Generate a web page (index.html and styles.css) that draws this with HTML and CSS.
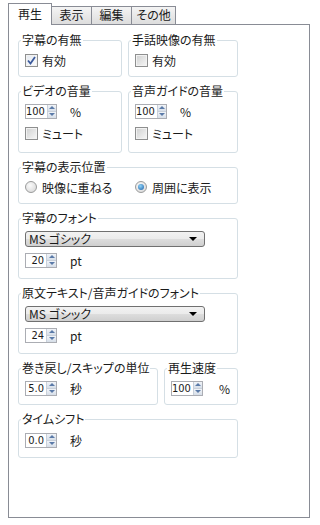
FILE: index.html
```html
<!DOCTYPE html>
<html lang="ja">
<head>
  <meta charset="UTF-8" />
  <title>設定</title>
  <link rel="stylesheet" href="styles.css">
</head>
<body>
  <div class="window">
    <div class="tabs">
      <div class="tab active">再生</div>
      <div class="tab">表示</div>
      <div class="tab">編集</div>
      <div class="tab wide">その他</div>
    </div>

    <div class="panel">
      <div class="content">

        <div class="pair">
          <fieldset class="group">
            <legend>字幕の有無</legend>
            <label class="row">
              <span class="check on">
                <svg width="9" height="9" viewBox="0 0 9 9"><path d="M1 4.5 L3.5 7.5 L8 1" fill="none" stroke="#3c5a9c" stroke-width="1.8"/></svg>
              </span>有効
            </label>
          </fieldset>
          <fieldset class="group">
            <legend>手話映像の有無</legend>
            <label class="row"><span class="check"></span>有効</label>
          </fieldset>
        </div>

        <div class="pair">
          <fieldset class="group vol">
            <legend>ビデオの音量</legend>
            <div class="row">
              <span class="spin"><span class="val">100</span><span class="btns"><i class="up"></i><i class="down"></i></span></span>
              <span class="unit">%</span>
            </div>
            <label class="row mute"><span class="check"></span>ミュート</label>
          </fieldset>
          <fieldset class="group vol">
            <legend>音声ガイドの音量</legend>
            <div class="row">
              <span class="spin"><span class="val">100</span><span class="btns"><i class="up"></i><i class="down"></i></span></span>
              <span class="unit">%</span>
            </div>
            <label class="row mute"><span class="check"></span>ミュート</label>
          </fieldset>
        </div>

        <fieldset class="group">
          <legend>字幕の表示位置</legend>
          <div class="row">
            <label class="radio-item first"><span class="radio"></span>映像に重ねる</label>
            <label class="radio-item"><span class="radio on"></span>周囲に表示</label>
          </div>
        </fieldset>

        <fieldset class="group font">
          <legend>字幕のフォント</legend>
          <div class="select">MS ゴシック<span class="caret"></span></div>
          <div class="row">
            <span class="spin"><span class="val">20</span><span class="btns"><i class="up"></i><i class="down"></i></span></span>
            <span class="unit">pt</span>
          </div>
        </fieldset>

        <fieldset class="group font">
          <legend>原文テキスト/音声ガイドのフォント</legend>
          <div class="select">MS ゴシック<span class="caret"></span></div>
          <div class="row">
            <span class="spin"><span class="val">24</span><span class="btns"><i class="up"></i><i class="down"></i></span></span>
            <span class="unit">pt</span>
          </div>
        </fieldset>

        <div class="pair skip">
          <fieldset class="group">
            <legend>巻き戻し/スキップの単位</legend>
            <div class="row">
              <span class="spin"><span class="val">5.0</span><span class="btns"><i class="up"></i><i class="down"></i></span></span>
              <span class="unit">秒</span>
            </div>
          </fieldset>
          <fieldset class="group">
            <legend>再生速度</legend>
            <div class="row">
              <span class="spin"><span class="val">100</span><span class="btns"><i class="up"></i><i class="down"></i></span></span>
              <span class="unit wide">%</span>
            </div>
          </fieldset>
        </div>

        <fieldset class="group last">
          <legend>タイムシフト</legend>
          <div class="row">
            <span class="spin"><span class="val">0.0</span><span class="btns"><i class="up"></i><i class="down"></i></span></span>
            <span class="unit">秒</span>
          </div>
        </fieldset>

      </div>
    </div>
  </div>
</body>
</html>
```

FILE: styles.css
```css
/* Basics */
* {
  box-sizing: border-box;
}
body {
  margin: 0;
  background: #fff;
  color: #1a1a1a;
  font-family: "Noto Sans CJK JP", "DejaVu Sans", sans-serif;
  font-size: 12px;
  font-feature-settings: "palt";
}

.window {
  padding: 3px 10px 0 8px;
}

/* Tabs */
.tabs {
  display: flex;
  align-items: flex-end;
  height: 21px;
  position: relative;
  z-index: 1;
}
.tab {
  width: 41px;
  height: 18px;
  margin-left: -1px;
  border: 1px solid #898c95;
  border-bottom: none;
  background: linear-gradient(#f4f4f4, #dddddd);
  text-align: center;
  line-height: 16px;
}
.tab.wide {
  width: 45px;
}
.tab.active {
  width: 44px;
  height: 22px;
  margin-left: 0;
  margin-bottom: -1px;
  background: #fff;
  line-height: 19px;
  position: relative;
  z-index: 2;
}

/* Panel */
.panel {
  height: 494px;
  border: 1px solid #898c95;
  background: #fff;
  padding: 8px 9px;
}
.content {
  width: 220px;
}

.pair {
  display: grid;
  grid-template-columns: 104px 1fr;
  gap: 6px;
}
.pair.skip {
  grid-template-columns: 140px 1fr;
}

/* Group boxes */
.group {
  margin: 0 0 7px;
  min-width: 0;
  border: 1px solid #d5dfe5;
  border-radius: 3px;
  padding: 5px 6px 8px;
}
.group legend {
  margin-left: -4px;
  padding: 0 1px;
  line-height: 14px;
  white-space: nowrap;
}
.group.vol {
  padding-bottom: 11px;
}
.group.font {
  padding-top: 6px;
  padding-bottom: 10px;
}
.group.last {
  padding-top: 6px;
  padding-bottom: 9px;
}

.row {
  display: flex;
  align-items: center;
  height: 16px;
}
.row.mute {
  margin-top: 6px;
}

/* Checkbox */
.check {
  width: 13px;
  height: 13px;
  margin-right: 4px;
  border: 1px solid #8e8f8f;
  background: linear-gradient(135deg, #cfd0d0, #f7f7f7);
  box-shadow: inset 0 0 0 1px #f2f2f2;
  display: flex;
  align-items: center;
  justify-content: center;
}
.check.on {
  background: linear-gradient(135deg, #e4e9f0, #fbfcfd);
}

/* Radio */
.radio-item {
  display: flex;
  align-items: center;
}
.radio-item.first {
  width: 110px;
}
.radio {
  width: 12px;
  height: 12px;
  margin-right: 5px;
  border: 1px solid #9a9b9b;
  border-radius: 50%;
  background: radial-gradient(circle at 40% 35%, #fafafa, #d4d4d4);
  display: flex;
  align-items: center;
  justify-content: center;
}
.radio.on::after {
  content: "";
  width: 6px;
  height: 6px;
  border-radius: 50%;
  background: radial-gradient(circle at 40% 35%, #8fd3f8, #1b5ea6);
}

/* Spinner */
.spin {
  display: flex;
  width: 32px;
  height: 15px;
  border: 1px solid #abadb3;
  background: #fff;
}
.spin .val {
  flex: 1;
  text-align: right;
  padding-right: 2px;
  font-family: "Liberation Sans Narrow", "DejaVu Sans Condensed", sans-serif;
  font-size: 11px;
  line-height: 13px;
}
.spin .btns {
  width: 10px;
  display: flex;
  flex-direction: column;
  border-left: 1px solid #c8d0da;
}
.spin .btns i {
  flex: 1;
  display: flex;
  align-items: center;
  justify-content: center;
  background: linear-gradient(#f1f4f8, #d6dee8);
}
.spin .btns i.up {
  border-bottom: 1px solid #c8d0da;
}
.spin .btns i::after {
  content: "";
  border-left: 3px solid transparent;
  border-right: 3px solid transparent;
}
.spin .btns i.up::after {
  border-bottom: 3px solid #5a7aa8;
}
.spin .btns i.down::after {
  border-top: 3px solid #5a7aa8;
}
.unit {
  margin-left: 13px;
}
.unit.wide {
  margin-left: 16px;
}

/* Dropdown */
.select {
  position: relative;
  width: 180px;
  height: 16px;
  margin-bottom: 5px;
  padding-left: 3px;
  border: 1px solid #707070;
  border-radius: 3px;
  background: linear-gradient(#f2f2f2 0%, #ebebeb 50%, #dddddd 51%, #cfcfcf 100%);
  line-height: 14px;
}
.select .caret {
  position: absolute;
  right: 7px;
  top: 5px;
  border-left: 4px solid transparent;
  border-right: 4px solid transparent;
  border-top: 4px solid #000;
}
```
